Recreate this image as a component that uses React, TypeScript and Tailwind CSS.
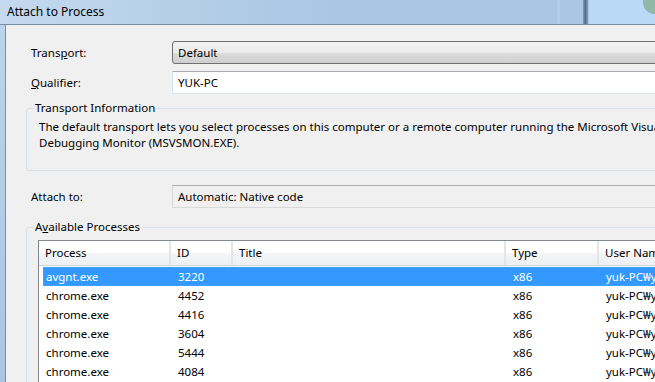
import React from "react";

interface Proc {
  name: string;
  id: string;
  title: string;
  type: string;
  user: string;
}

const processes: Proc[] = [
  { name: "avgnt.exe", id: "3220", title: "", type: "x86", user: "yuk-PC₩yuk" },
  { name: "chrome.exe", id: "4452", title: "", type: "x86", user: "yuk-PC₩yuk" },
  { name: "chrome.exe", id: "4416", title: "", type: "x86", user: "yuk-PC₩yuk" },
  { name: "chrome.exe", id: "3604", title: "", type: "x86", user: "yuk-PC₩yuk" },
  { name: "chrome.exe", id: "5444", title: "", type: "x86", user: "yuk-PC₩yuk" },
  { name: "chrome.exe", id: "4084", title: "", type: "x86", user: "yuk-PC₩yuk" },
];

const font = { fontFamily: '"Noto Sans", "Noto Sans CJK KR", sans-serif' };

// groupbox with its caption sitting on the top border
const GroupBox: React.FC<{ label: React.ReactNode; className?: string; children?: React.ReactNode }> = ({
  label,
  className,
  children,
}) => (
  <div className={`relative border border-[#d5dfe5] rounded-[3px] ${className ?? ""}`}>
    <span className="absolute left-[7px] -top-[9px] px-[1px] bg-[#f0f0f0] leading-[16px]">{label}</span>
    {children}
  </div>
);

const App: React.FC = () => {
  return (
    <div className="w-[655px] h-[382px] overflow-hidden flex flex-col text-[11.5px] text-black bg-[#f0f0f0]" style={font}>
      {/* title bar */}
      <div className="relative h-[25px] shrink-0 flex items-center pl-[7px] bg-gradient-to-r from-[#c4d9ee] via-[#a9c6e3] to-[#a8c6e3] border-b border-[#7d8fa4]">
        <span className="text-[12px] leading-none">Attach to Process</span>
        <div className="absolute left-[557px] top-0 h-full w-[3px] bg-[#b3cde6]" />
        <div className="absolute left-[583px] top-0 h-full w-[5px] bg-gradient-to-r from-[#7d97b6] via-[#4f6b8e] to-[#8aa6c6]" />
        <div className="absolute left-[589px] top-0 h-full w-[66px] bg-[#b9d9f6]" />
        <div className="absolute left-[643px] top-0 h-[14px] w-[12px] rounded-bl-full bg-[#8fb8a6]" />
      </div>

      <div className="flex flex-1 min-h-0">
        {/* left frame */}
        <div className="w-[5px] shrink-0 bg-gradient-to-b from-[#bcd4ec] to-[#a9c5e2]" />
        <div className="flex-1 border-l border-[#7d8fa4] bg-[#f0f0f0] overflow-hidden">
          <div className="w-[900px] pt-[16px] pl-[20px]">
            {/* Transport */}
            <div className="flex items-center h-[23px]">
              <span className="w-[146px] pl-[5px]">
                Trans<span className="underline">p</span>ort:
              </span>
              <div className="flex-1 h-[23px] flex items-center pl-[5px] rounded-[3px] border border-[#707070] bg-[linear-gradient(#f2f2f2_0%,#ebebeb_50%,#dddddd_51%,#cfcfcf_100%)]">
                Default
              </div>
            </div>
            {/* Qualifier */}
            <div className="flex items-center h-[23px] mt-[7px]">
              <span className="w-[146px] pl-[5px]">
                <span className="underline">Q</span>ualifier:
              </span>
              <div className="flex-1 h-[23px] flex items-center pl-[5px] bg-white border border-[#dbe3ea] border-t-[#abadb3]">
                YUK-PC
              </div>
            </div>

            {/* Transport Information */}
            <GroupBox label="Transport Information" className="mt-[14px] h-[63px] pl-[12px] pt-[10px]">
              <p className="leading-[16px]">
                The default transport lets you select processes on this computer or a remote computer running the Microsoft Visual Studio Remote
                <br />
                Debugging Monitor (MSVSMON.EXE).
              </p>
            </GroupBox>

            {/* Attach to */}
            <div className="flex items-center h-[23px] mt-[14px]">
              <span className="w-[146px] pl-[5px]">Attach to:</span>
              <div className="flex-1 h-[23px] flex items-center pl-[5px] bg-[#f0f0f0] border border-[#d9d9d9] border-t-[#adadad]">
                Automatic: Native code
              </div>
            </div>

            {/* Available Processes */}
            <GroupBox
              label={
                <>
                  A<span className="underline">v</span>ailable Processes
                </>
              }
              className="mt-[19px] h-[200px] pl-[11px] pt-[12px]"
            >
              <div className="border border-[#828790] bg-white h-[180px]">
                <div className="flex h-[25px] bg-[linear-gradient(#ffffff_0%,#ffffff_45%,#f3f4f6_55%,#eef0f2_100%)] border-b border-[#d5d5d5]">
                  {[
                    ["Process", "w-[132px]"],
                    ["ID", "w-[62px]"],
                    ["Title", "w-[273px]"],
                    ["Type", "w-[93px]"],
                    ["User Name", "w-[120px]"],
                  ].map(([t, w]) => (
                    <div key={t} className={`${w} flex items-center pl-[6px] border-r-2 border-[#e3e5e8]`}>
                      {t}
                    </div>
                  ))}
                </div>
                <div className="pt-[1px]">
                  {processes.map((p, i) => (
                    <div
                      key={i}
                      className={`flex h-[19px] items-center ml-[4px] ${
                        i === 0 ? "bg-[#3399ff] text-white border border-dotted border-[#d98b3a]" : "border border-transparent"
                      }`}
                    >
                      <span className="w-[128px] pl-[2px]">{p.name}</span>
                      <span className="w-[62px] pl-[6px]">{p.id}</span>
                      <span className="w-[273px] pl-[6px]">{p.title}</span>
                      <span className="w-[93px] pl-[6px]">{p.type}</span>
                      <span className="w-[120px] pl-[6px]">{p.user}</span>
                    </div>
                  ))}
                </div>
              </div>
            </GroupBox>
          </div>
        </div>
      </div>
    </div>
  );
};

export default App;
